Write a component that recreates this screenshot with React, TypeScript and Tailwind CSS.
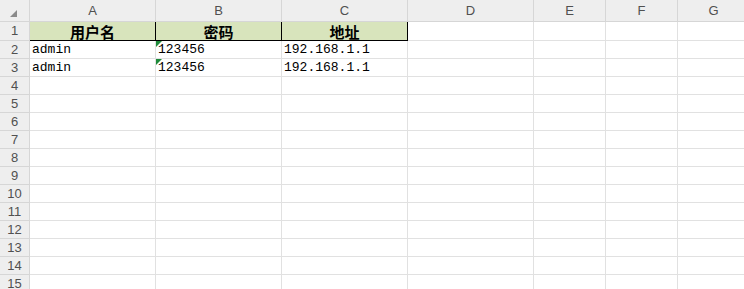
import React from "react";

const cols = [
  { name: "A", w: "w-[126px]" },
  { name: "B", w: "w-[126px]" },
  { name: "C", w: "w-[126px]" },
  { name: "D", w: "w-[126px]" },
  { name: "E", w: "w-[72px]" },
  { name: "F", w: "w-[72px]" },
  { name: "G", w: "w-[72px]" },
];

const data: Record<number, string[]> = {
  2: ["admin", "123456", "192.168.1.1"],
  3: ["admin", "123456", "192.168.1.1"],
};

const headers = ["用户名", "密码", "地址"];

function Corner() {
  return (
    <div className="relative w-[30px] h-[22px] shrink-0 bg-[#eeeeee] border-r border-b border-[#d6d6d6]">
      <svg className="absolute left-[10px] top-[10px]" width="7" height="7" viewBox="0 0 7 7">
        <polygon points="7,0 7,7 0,7" fill="#8a8a8a" />
      </svg>
    </div>
  );
}

function HeaderRow() {
  return (
    <div className="flex">
      <Corner />
      {cols.map((c) => (
        <div
          key={c.name}
          className={`${c.w} h-[22px] shrink-0 bg-[#eeeeee] border-r border-b border-[#d6d6d6] flex items-center justify-center text-[13px] text-[#505050]`}
        >
          {c.name}
        </div>
      ))}
    </div>
  );
}

function RowLabel({ n, h }: { n: number; h: string }) {
  return (
    <div
      className={`w-[30px] ${h} shrink-0 bg-[#eeeeee] border-r border-b border-[#d6d6d6] flex items-center justify-center text-[13px] text-[#505050]`}
    >
      {n}
    </div>
  );
}

export default function App() {
  const rows = Array.from({ length: 15 }, (_, i) => i + 1);

  return (
    <div className="w-[744px] h-[289px] overflow-hidden bg-white font-['Liberation_Sans',Arial,sans-serif]">
      <HeaderRow />
      {rows.map((r) => {
        const h = r === 1 ? "h-[19px]" : "h-[18px]";
        return (
          <div key={r} className="flex">
            <RowLabel n={r} h={h} />
            {cols.map((c, ci) => {
              if (r === 1 && ci < 3) {
                return (
                  <div
                    key={c.name}
                    className={`${c.w} ${h} shrink-0 bg-[#d8e4bc] border-r border-b border-black flex items-center justify-center text-[15px] font-bold text-black font-['Noto_Sans_CJK_SC',sans-serif] leading-none`}
                  >
                    {headers[ci]}
                  </div>
                );
              }
              const val = data[r]?.[ci];
              return (
                <div
                  key={c.name}
                  className={`relative ${c.w} ${h} shrink-0 border-r border-b border-[#e1e1e1] flex items-center pl-[2px] text-[13px] text-black font-['Liberation_Mono',monospace] whitespace-nowrap`}
                >
                  {ci === 1 && val && (
                    <svg className="absolute left-0 top-0" width="6" height="6" viewBox="0 0 6 6">
                      <polygon points="0,0 6,0 0,6" fill="#1e8a3a" />
                    </svg>
                  )}
                  {val}
                </div>
              );
            })}
          </div>
        );
      })}
    </div>
  );
}
